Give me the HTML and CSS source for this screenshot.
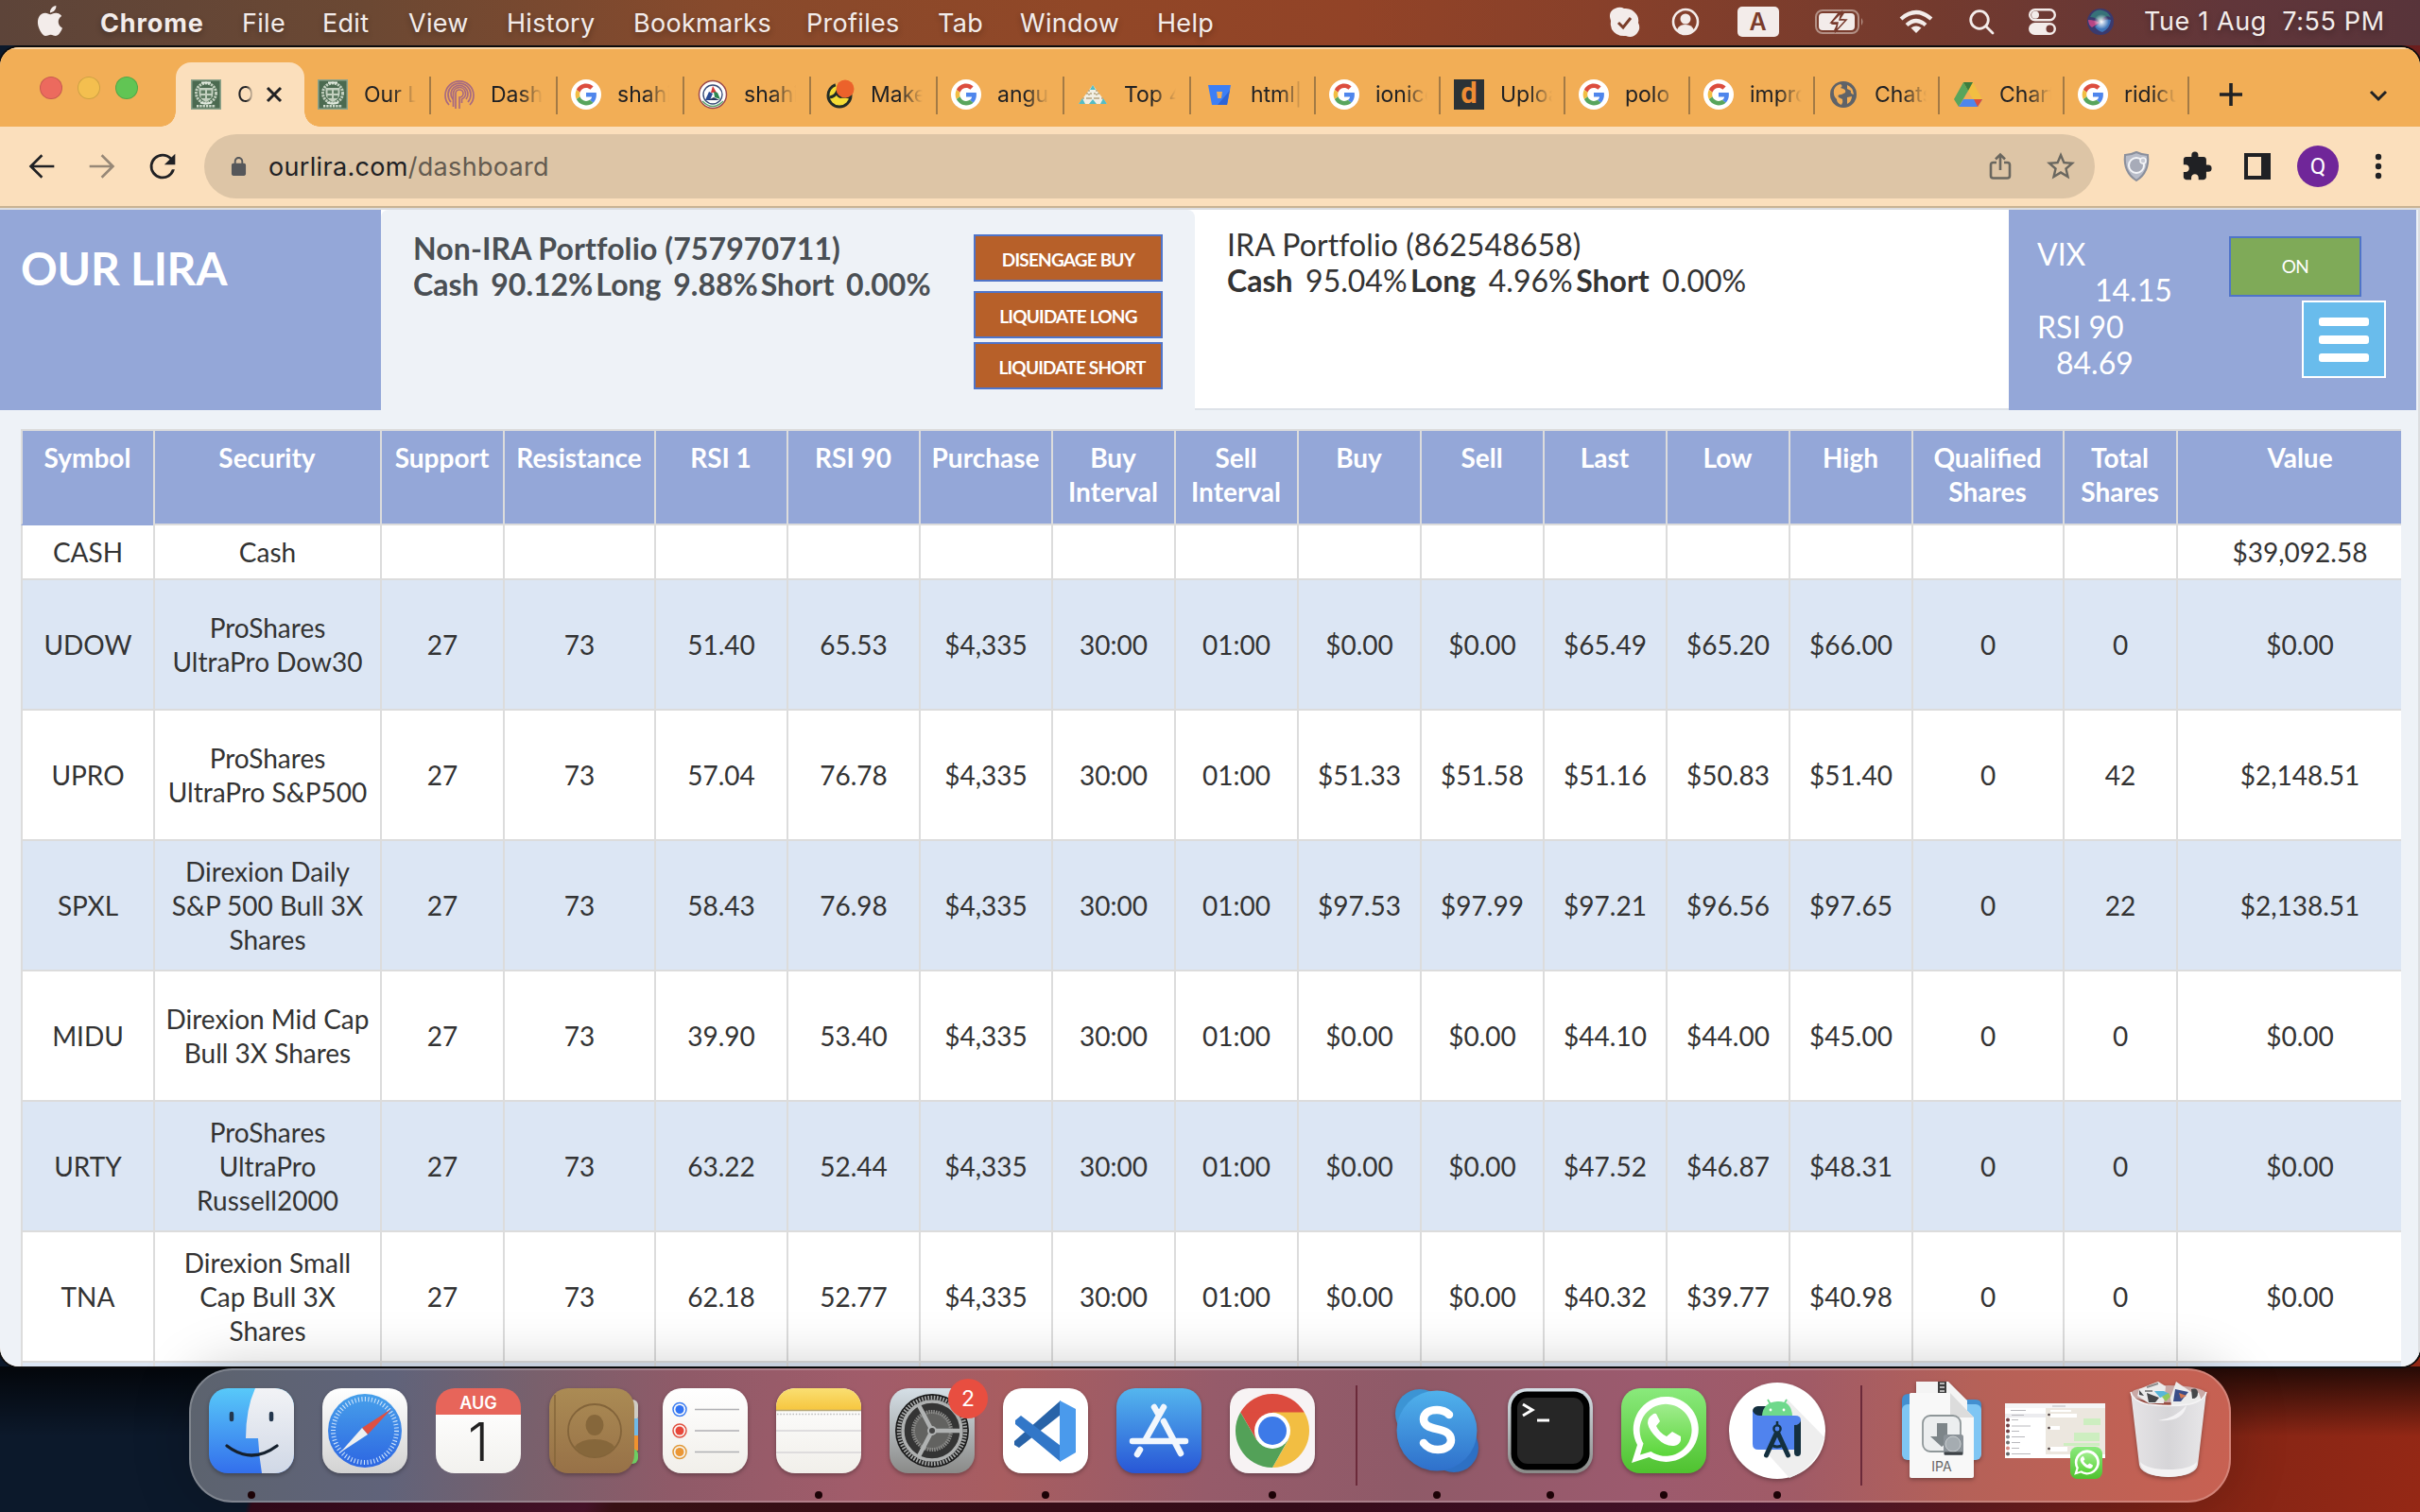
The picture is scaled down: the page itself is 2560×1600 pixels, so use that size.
FILE: index.html
```html
<!DOCTYPE html>
<html lang="en">
<head>
<meta charset="utf-8">
<title>Our Lira</title>
<link rel="stylesheet" href="styles.css">
</head>
<body>
<svg class="defs" width="0" height="0">
  <defs>
    <symbol id="google" viewBox="0 0 32 32">
      <circle cx="16" cy="16" r="16" fill="#fff"/>
      <g transform="translate(4.6 4.6) scale(.475)">
        <path fill="#dc4d3e" d="M24 9.5c3.54 0 6.71 1.22 9.21 3.6l6.85-6.85C35.9 2.38 30.47 0 24 0 14.62 0 6.51 5.38 2.56 13.22l7.98 6.19C12.43 13.72 17.74 9.5 24 9.5z"/>
        <path fill="#4f86ec" d="M46.98 24.55c0-1.57-.15-3.09-.38-4.55H24v9.02h12.94c-.58 2.96-2.26 5.48-4.78 7.18l7.73 6c4.51-4.18 7.09-10.36 7.09-17.65z"/>
        <path fill="#f2be42" d="M10.53 28.59c-.48-1.45-.76-2.99-.76-4.59s.27-3.14.76-4.59l-7.98-6.19C.92 16.46 0 20.12 0 24c0 3.88.92 7.54 2.56 10.78l7.97-6.19z"/>
        <path fill="#58a55c" d="M24 48c6.48 0 11.93-2.13 15.89-5.81l-7.73-6c-2.15 1.45-4.92 2.3-8.16 2.3-6.26 0-11.57-4.22-13.47-9.91l-7.98 6.19C6.51 42.62 14.62 48 24 48z"/>
      </g>
    </symbol>
    <symbol id="lira" viewBox="0 0 32 32">
      <rect width="32" height="32" fill="#8fa58c"/><rect x="1.500" y="1.500" width="29" height="29" fill="#4b6a50"/>
      <circle cx="16" cy="14.500" r="10.500" fill="none" stroke="#c3d0bf" stroke-width="3" stroke-dasharray="2.200 1"/>
      <path d="M8.500 9h15v6q0 6-7.500 9-7.500-3-7.500-9z" fill="#c3d0bf"/><path d="M10.500 11.500h4.500v3.500h-4.500zM17 11.500h4.500v3.500H17zM10.500 17h4.500v3h-4.500zM17 17h4.500v3H17z" fill="#5f7d63"/>
      <path d="M11 3.500h10M10 24.500q6 2 12 0" stroke="#e3ebe0" stroke-width="2" fill="none"/>
      <path d="M6 28.200h20" stroke="#d3ddcf" stroke-width="2.500" stroke-dasharray="2.300 1"/>
    </symbol>
    <symbol id="whatsapp" viewBox="0 0 90 90">
      <rect width="90" height="90" rx="20" fill="url(#waBg)"/>
      <path d="M11 79l6-19a34.500 34.500 0 1 1 12.500 13z" fill="#fff"/>
      <path d="M20 70.500l3.500-12a27.500 27.500 0 1 1 8 8.500z" fill="url(#waIn)"/>
      <path d="M33 28q-5 3-5 9 1 7 10 16t18 8q6-1 7-6v-4l-9-5-6 5q-8-4-11-11l4-5-4-8q-2-1-4 1z" fill="#fff"/>
    </symbol>
    <linearGradient id="waBg" x1="0" y1="0" x2="0" y2="1"><stop offset="0" stop-color="#8aea7c"/><stop offset="1" stop-color="#4fc22f"/></linearGradient>
    <linearGradient id="waIn" x1="0" y1="0" x2="0" y2="1"><stop offset="0" stop-color="#a0ec8e"/><stop offset="1" stop-color="#5bd63a"/></linearGradient>
    <linearGradient id="skyBlue" x1="0" y1="0" x2="0" y2="1"><stop offset="0" stop-color="#58c9f9"/><stop offset="1" stop-color="#336fec"/></linearGradient>
    <linearGradient id="silver" x1="0" y1="0" x2="0" y2="1"><stop offset="0" stop-color="#fff"/><stop offset="1" stop-color="#d2d2d2"/></linearGradient>
    <linearGradient id="face" x1="0" y1="0" x2="0" y2="1"><stop offset="0" stop-color="#f2f3f6"/><stop offset="1" stop-color="#d0d8e6"/></linearGradient>
    <linearGradient id="compass" x1="0" y1="0" x2="0" y2="1"><stop offset="0" stop-color="#47a0ea"/><stop offset="1" stop-color="#2d66e2"/></linearGradient>
    <linearGradient id="paper" x1="0" y1="0" x2="0" y2="1"><stop offset="0" stop-color="#fff"/><stop offset="1" stop-color="#f1efea"/></linearGradient>
    <linearGradient id="leather" x1="0" y1="0" x2="0" y2="1"><stop offset="0" stop-color="#ab8b54"/><stop offset="1" stop-color="#977147"/></linearGradient>
    <linearGradient id="steel" x1="0" y1="0" x2="0" y2="1"><stop offset="0" stop-color="#d5dfe6"/><stop offset="1" stop-color="#8a8a88"/></linearGradient>
    <linearGradient id="store" x1="0" y1="0" x2="0" y2="1"><stop offset="0" stop-color="#54b6ee"/><stop offset="1" stop-color="#2856d6"/></linearGradient>
    <linearGradient id="skype" x1="0" y1="0" x2="0" y2="1"><stop offset="0" stop-color="#50b2ec"/><stop offset="1" stop-color="#2f70cb"/></linearGradient>
    <linearGradient id="bin" x1="0" y1="0" x2="1" y2="0"><stop offset="0" stop-color="#e6e4e6"/><stop offset=".5" stop-color="#d6d5d8"/><stop offset="1" stop-color="#e8e7e9"/></linearGradient>
    <linearGradient id="noteTop" x1="0" y1="0" x2="0" y2="1"><stop offset="0" stop-color="#fadf72"/><stop offset="1" stop-color="#f6c63f"/></linearGradient>
    <radialGradient id="glow"><stop offset="0" stop-color="#fff"/><stop offset="1" stop-color="#fff" stop-opacity="0"/></radialGradient>
  </defs>
</svg>

<header class="menubar">
  <svg class="apple" viewBox="0 0 24 24"><path d="M12.152 6.896c-.948 0-2.415-1.078-3.96-1.04-2.04.027-3.91 1.183-4.961 3.014-2.117 3.675-.546 9.103 1.519 12.09 1.013 1.454 2.208 3.09 3.792 3.039 1.52-.065 2.09-.987 3.935-.987 1.831 0 2.35.987 3.96.948 1.637-.026 2.676-1.48 3.676-2.948 1.156-1.688 1.636-3.325 1.662-3.415-.039-.013-3.182-1.221-3.22-4.857-.026-3.04 2.48-4.494 2.597-4.559-1.429-2.09-3.623-2.324-4.39-2.376-2-.156-3.675 1.09-4.61 1.09zM15.53 3.83c.843-1.012 1.4-2.427 1.245-3.83-1.207.052-2.662.805-3.532 1.818-.78.896-1.454 2.338-1.273 3.714 1.338.104 2.715-.688 3.559-1.701"/></svg>
  <nav class="menus"><b>Chrome</b><span>File</span><span>Edit</span><span>View</span><span>History</span><span>Bookmarks</span><span>Profiles</span><span>Tab</span><span>Window</span><span>Help</span></nav>
  <div class="status">
    <svg width="33" height="33" viewBox="0 0 33 33"><path d="M9 1q4-1 7 1 8-1 13 6 3 4 2 9 3 6-1 11-5 6-12 3Q8 32 3 24 1 19 2 15-2 4 9 1z" fill="#f3ecea"/><path d="M10 17l5 5 8-10" fill="none" stroke="#7a3d29" stroke-width="3"/></svg>
    <svg width="30" height="30" viewBox="0 0 30 30"><circle cx="15" cy="15" r="13" fill="none" stroke="#f3ecea" stroke-width="2.600"/><circle cx="15" cy="12" r="5.500" fill="#f3ecea"/><path d="M6 24q2-6 9-6t9 6q-4 4-9 4t-9-4z" fill="#f3ecea"/></svg>
    <span class="input-source">A</span>
    <svg width="52" height="26" viewBox="0 0 52 26"><rect x="1" y="1" width="45" height="24" rx="7" fill="none" stroke="#b39085" stroke-width="2"/><path d="M49 9q3 4 0 8z" fill="#b39085"/><path d="M8 4h16l-7 9q-1 3 2 3h4l-3 6H8q-4 0-4-4V8q0-4 4-4zM31 4h7q4 0 4 4v10q0 4-4 4H22l9-10q1-2-1-2h-3z" fill="#f3ecea"/><path d="M28 3L17 14h7l-2 9 11-12h-7z" fill="#f3ecea" stroke="#77392c" stroke-width="1.500"/></svg>
    <svg width="36" height="26" viewBox="0 0 36 26" fill="none" stroke="#f3ecea" stroke-width="4.200"><path d="M2 10q16-14 32 0M8 16.500q10-9 20 0"/><path d="M18 25l-5.500-5.500q5.500-4 11 0z" fill="#f3ecea" stroke="none"/></svg>
    <svg width="26" height="26" viewBox="0 0 26 26" fill="none" stroke="#f3ecea" stroke-width="2.800"><circle cx="11" cy="11" r="9.300"/><path d="M18 18l7 7" stroke-linecap="round"/></svg>
    <svg width="29" height="28" viewBox="0 0 29 28"><rect x="1.200" y="1.200" width="26.600" height="11" rx="5.500" fill="none" stroke="#f3ecea" stroke-width="2.400"/><circle cx="7" cy="6.700" r="4" fill="#f3ecea"/><rect y="15" width="29" height="13" rx="6.500" fill="#f3ecea"/><circle cx="22.500" cy="21.500" r="4" fill="#6f3833"/></svg>
    <svg width="28" height="28" viewBox="0 0 28 28"><circle cx="14" cy="14" r="14" fill="#3a3a6e"/><path d="M3 9Q7 1 14 1.500q8 1 11 8-7-4-11 5-3-5-11-5.500z" fill="#35a183" opacity=".55"/><path d="M1 12q7 0 12 3-5 3-8 5-4-3-4-8z" fill="#d84a8b" opacity=".8"/><path d="M14 15q6-5 11-3-1 9-9 13-6-2-8-6z" fill="#3f8fd8" opacity=".7"/><circle cx="15" cy="14" r="8" fill="url(#glow)"/></svg>
    <time>Tue 1 Aug&nbsp; 7:55 PM</time>
  </div>
</header>

<main class="window">
  <div class="tabstrip">
    <div class="lights"><i class="red"></i><i class="yellow"></i><i class="green"></i></div>
    <div class="tab active"><svg class="fav"><use href="#lira"/></svg><span>Our</span><svg class="close" viewBox="0 0 20 20"><path d="M3 3l14 14M17 3L3 17" stroke="#202124" stroke-width="3"/></svg></div>
    <div class="tab"><svg class="fav"><use href="#lira"/></svg><span>Our Lira</span></div>
    <div class="tab"><svg class="fav" viewBox="0 0 32 32" fill="none" stroke="#a86a80" stroke-width="1.700"><path d="M5 27A15 15 0 1 1 27 27M7 24A12 12 0 1 1 25 24M9 21A9 9 0 1 1 23 21M12 31V15a4 4 0 1 1 4 4v12M9.500 29V15a6.500 6.500 0 1 1 9 6v4"/></svg><span>Dashboard</span></div>
    <div class="tab"><svg class="fav"><use href="#google"/></svg><span>shahid</span></div>
    <div class="tab"><svg class="fav" viewBox="0 0 32 32"><circle cx="16" cy="16" r="14.500" fill="#fff" stroke="#9c4a4c" stroke-width="1.500"/><circle cx="16" cy="16" r="10" fill="#fff" stroke="#394c77" stroke-width="1.400"/><path d="M16 7l4 7h-6z" fill="#d33a3a"/><path d="M12 13l4 2-3 7H8z" fill="#284a93"/><path d="M17 13l4 1 3 7-6-2z" fill="#2d8750"/><path d="M11 22l6-3 6 3z" fill="#26365f"/><path d="M5 23q11 11 22 0" fill="none" stroke="#5da36b" stroke-width="1.500"/></svg><span>shahid</span></div>
    <div class="tab"><svg class="fav" viewBox="0 0 32 32"><circle cx="16" cy="17" r="12" fill="#f5dc35" stroke="#222c26" stroke-width="3" stroke-dasharray="52 12"/><path d="M6 19q5-1 7-5 3 6 6 4 4 0 8 1" fill="none" stroke="#222c26" stroke-width="3"/><circle cx="22" cy="10" r="9.500" fill="#ec622b"/></svg><span>Make a</span></div>
    <div class="tab"><svg class="fav"><use href="#google"/></svg><span>angular</span></div>
    <div class="tab"><svg class="fav" viewBox="0 0 32 32"><path d="M16 6l15 20H1z" fill="#f2efe4"/><path d="M16 6l3 5h-6zM1 26l4-6 3 6zM12 26l4-5 4 5zM24 26l3-6 4 6z" fill="#55bdc5"/><path d="M9 15h14M5 20h22M12 11v10M20 11v10" stroke="#b5a47f" stroke-width="1.500" stroke-dasharray="2 2"/></svg><span>Top 40</span></div>
    <div class="tab t132"><svg class="fav" viewBox="0 0 32 32"><path d="M4 6h24l-4 21H8z" fill="#3d7ff5"/><path d="M14 27l11-13 2-3-3 16z" fill="#2c65d8"/><path d="M13 13h6l-1 7h-4z" fill="#f1ae56"/></svg><span>html|css</span></div>
    <div class="tab t132"><svg class="fav"><use href="#google"/></svg><span>ionicon</span></div>
    <div class="tab t132"><b class="fav dfav">d</b><span>Upload</span></div>
    <div class="tab t132"><svg class="fav"><use href="#google"/></svg><span>polo</span></div>
    <div class="tab t132"><svg class="fav"><use href="#google"/></svg><span>improve</span></div>
    <div class="tab t132"><svg class="fav" viewBox="0 0 32 32"><circle cx="16" cy="16" r="14" fill="#5f6368"/><path d="M6 11q2-5 7-6 3 2 0 4l3 1q3 1 2 4l-4 2q-5 0-3 3l4 2q1 3-1 6-5-2-5-6-4-3-3-10zM20 6q6 2 7 10-4-1-3-4l-4-2zM20 19l5-1q0 5-5 8z" fill="#f2ae56"/></svg><span>Chats</span></div>
    <div class="tab t132"><svg class="fav" viewBox="0 0 32 32"><path d="M11 3h10l10 18H21z" fill="#f2be42"/><path d="M11 3l5 9L6 29 1 21z" fill="#58a55c"/><path d="M11 3h10l-5 9z" fill="#3b7d3e"/><path d="M6 29l5-8h20l-5 8z" fill="#4f86ec"/><path d="M31 21h-9l4 8z" fill="#dc4d3e"/></svg><span>Chart</span></div>
    <div class="tab t132"><svg class="fav"><use href="#google"/></svg><span>ridicul</span></div>
    <svg class="plus" width="26" height="28" viewBox="0 0 26 28"><path d="M13 2v24M1 14h24" stroke="#202124" stroke-width="3.600"/></svg>
    <svg class="chevron" width="20" height="14" viewBox="0 0 20 14"><path d="M2 3l8 8 8-8" fill="none" stroke="#202124" stroke-width="3"/></svg>
  </div>

  <div class="toolbar">
    <svg class="nav-icon" viewBox="0 0 24 24"><path d="M20 11.200H7.100l5.700-5.700L11.700 4.300 4 12l7.700 7.700 1.100-1.200-5.700-5.700H20z"/></svg>
    <svg class="nav-icon dim" viewBox="0 0 24 24"><path d="M4 11.200h12.900l-5.700-5.700 1.100-1.200L20 12l-7.700 7.700-1.100-1.200 5.700-5.700H4z"/></svg>
    <svg class="nav-icon" viewBox="0 0 24 24"><path d="M17.650 6.350A7.960 7.960 0 0 0 12 4a8 8 0 1 0 7.730 10h-1.800A6.300 6.300 0 1 1 12 5.700c1.700 0 3.300.7 4.500 1.900L13.100 11H20V4z"/></svg>
    <div class="omnibox">
      <svg class="lock" viewBox="3 0 18 23"><path d="M18 8h-1V6c0-2.760-2.240-5-5-5S7 3.240 7 6v2H6c-1.100 0-2 .9-2 2v10c0 1.100.9 2 2 2h12c1.100 0 2-.9 2-2V10c0-1.100-.9-2-2-2zM9 6c0-1.660 1.340-3 3-3s3 1.340 3 3v2H9z"/></svg>
      <p class="url">ourlira.com<span>/dashboard</span></p>
      <svg class="share" width="24" height="30" viewBox="0 0 24 30"><path d="M8 11H4.500Q2 11 2 13.500V25q0 2.500 2.500 2.500h15Q22 27.500 22 25V13.500Q22 11 19.500 11H16M12 19V3M7 7.500l5-5 5 5"/></svg>
      <svg class="star" width="36" height="36" viewBox="0 0 24 24"><path d="M22 9.240l-7.190-.62L12 2 9.190 8.630 2 9.240l5.460 4.730L5.820 21 12 17.270 18.180 21l-1.630-7.030L22 9.240zM12 15.400l-3.760 2.270 1-4.280-3.320-2.880 4.380-.38L12 6.100l1.710 4.040 4.380.38-3.320 2.880 1 4.280L12 15.400z"/></svg>
    </div>
    <div class="extensions">
      <svg width="28" height="32" viewBox="0 0 28 32"><path d="M14 1q6 3 12 3 2 18-12 27Q0 22 2 4q6 0 12-3z" fill="#b9bdc9" stroke="#8a8f9c" stroke-width="2"/><circle cx="14" cy="15" r="8" fill="#a7abb8" stroke="#f4f5f8" stroke-width="2"/><circle cx="21" cy="10" r="3" fill="#c5c8d2" stroke="#f4f5f8" stroke-width="1.500"/></svg>
      <svg width="34" height="34" viewBox="0 0 24 24"><path d="M20.500 11H19V7c0-1.100-.9-2-2-2h-4V3.500a2.500 2.500 0 0 0-5 0V5H4c-1.100 0-1.990.9-1.990 2v3.800H3.500c1.490 0 2.700 1.210 2.700 2.700s-1.210 2.700-2.700 2.700H2V20c0 1.100.9 2 2 2h3.800v-1.500c0-1.490 1.210-2.700 2.700-2.700s2.700 1.210 2.700 2.700V22H17c1.100 0 2-.9 2-2v-4h1.500a2.500 2.500 0 0 0 0-5z" fill="#202124"/></svg>
      <svg width="28" height="28" viewBox="0 0 28 28"><path d="M0 0h28v28H0zM4 4v20h14V4z" fill="#202124" fill-rule="evenodd"/></svg>
      <span class="avatar">Q</span>
      <svg width="8" height="28" viewBox="0 0 8 28" fill="#202124"><circle cx="4" cy="4" r="3.200"/><circle cx="4" cy="14" r="3.200"/><circle cx="4" cy="24" r="3.200"/></svg>
    </div>
  </div>

  <section class="page">
    <div class="summary">
      <div class="brand">OUR LIRA</div>
      <div class="card-wrap"><div class="card non-ira">
        <div class="info"><div class="title">Non-IRA Portfolio (757970711)</div><div class="split">Cash&nbsp; 90.12%<i> </i>Long&nbsp; 9.88%<i> </i>Short&nbsp; 0.00%</div></div>
        <div class="actions"><button>DISENGAGE BUY</button><button>LIQUIDATE LONG</button><button>LIQUIDATE SHORT</button></div>
      </div></div>
      <div class="card ira"><div class="title">IRA Portfolio (862548658)</div><div class="split"><b>Cash</b>&nbsp; 95.04%<i> </i><b>Long</b>&nbsp; 4.96%<i> </i><b>Short</b>&nbsp; 0.00%</div></div>
      <div class="market">
        <div class="readings"><div>VIX</div><div class="vix">14.15</div><div>RSI 90</div><div class="rsi">84.69</div></div>
        <div class="controls"><button class="on">ON</button><button class="burger"><i></i><i></i><i></i></button></div>
      </div>
    </div>
    <table class="holdings">
      <colgroup><col class="w140"><col class="w240"><col class="w130"><col class="w160"><col class="w140"><col class="w140"><col class="w140"><col class="w130"><col class="w130"><col class="w130"><col class="w130"><col class="w130"><col class="w130"><col class="w130"><col class="w160"><col class="w120"><col></colgroup>
      <thead><tr><th>Symbol<th>Security<th>Support<th>Resistance<th>RSI 1<th>RSI 90<th>Purchase<th>Buy Interval<th>Sell Interval<th>Buy<th>Sell<th>Last<th>Low<th>High<th>Qualified Shares<th>Total Shares<th>Value</tr></thead>
      <tbody>
      <tr class="cash"><td>CASH<td>Cash<td><td><td><td><td><td><td><td><td><td><td><td><td><td><td>$39,092.58</tr>
      <tr><td>UDOW<td>ProShares UltraPro Dow30<td>27<td>73<td>51.40<td>65.53<td>$4,335<td>30:00<td>01:00<td>$0.00<td>$0.00<td>$65.49<td>$65.20<td>$66.00<td>0<td>0<td>$0.00</tr>
      <tr><td>UPRO<td>ProShares UltraPro S&amp;P500<td>27<td>73<td>57.04<td>76.78<td>$4,335<td>30:00<td>01:00<td>$51.33<td>$51.58<td>$51.16<td>$50.83<td>$51.40<td>0<td>42<td>$2,148.51</tr>
      <tr><td>SPXL<td>Direxion Daily S&amp;P 500 Bull 3X Shares<td>27<td>73<td>58.43<td>76.98<td>$4,335<td>30:00<td>01:00<td>$97.53<td>$97.99<td>$97.21<td>$96.56<td>$97.65<td>0<td>22<td>$2,138.51</tr>
      <tr><td>MIDU<td>Direxion Mid Cap Bull 3X Shares<td>27<td>73<td>39.90<td>53.40<td>$4,335<td>30:00<td>01:00<td>$0.00<td>$0.00<td>$44.10<td>$44.00<td>$45.00<td>0<td>0<td>$0.00</tr>
      <tr><td>URTY<td>ProShares UltraPro Russell2000<td>27<td>73<td>63.22<td>52.44<td>$4,335<td>30:00<td>01:00<td>$0.00<td>$0.00<td>$47.52<td>$46.87<td>$48.31<td>0<td>0<td>$0.00</tr>
      <tr><td>TNA<td>Direxion Small Cap Bull 3X Shares<td>27<td>73<td>62.18<td>52.77<td>$4,335<td>30:00<td>01:00<td>$0.00<td>$0.00<td>$40.32<td>$39.77<td>$40.98<td>0<td>0<td>$0.00</tr>
      <tr><td><td><td><td><td><td><td><td><td><td><td><td><td><td><td><td><td></tr>
      </tbody>
    </table>
  </section>
</main>

<footer class="dock">
  <div class="app running"><svg viewBox="0 0 90 90"><clipPath id="r"><rect width="90" height="90" rx="20"/></clipPath><g clip-path="url(#r)"><rect width="90" height="90" fill="url(#skyBlue)"/><path d="M49 0h41v90H56q-3-18-4-37H39Q39 22 49 0z" fill="url(#face)"/></g><path d="M24 27v6M66 27v6" stroke="#23364d" stroke-width="4.500" stroke-linecap="round"/><path d="M19 61q26 20 53 0" fill="none" stroke="#15202d" stroke-width="3.200" stroke-linecap="round"/></svg></div>
  <div class="app"><svg viewBox="0 0 90 90"><rect width="90" height="90" rx="20" fill="url(#silver)"/><circle cx="45" cy="45" r="39" fill="url(#compass)"/><circle cx="45" cy="45" r="33.500" fill="none" stroke="#cfe4fb" stroke-width="5" stroke-dasharray="1.100 2.400"/><path d="M73 22L48 49l-6-7z" fill="#dd5043"/><path d="M19 68l23-26 6 7z" fill="#eef0f2"/></svg></div>
  <div class="app calendar"><span>AUG</span><b>1</b></div>
  <div class="app"><svg viewBox="0 0 90 90"><rect x="60" y="12" width="34" height="24" rx="6" fill="#cfccc4"/><rect x="60" y="32" width="34" height="18" fill="#6fb9e8"/><rect x="60" y="50" width="34" height="16" fill="#f0922f"/><rect x="60" y="64" width="34" height="16" rx="6" fill="#6dcd62"/><rect width="90" height="90" rx="20" fill="url(#leather)"/><path d="M6 7v76" stroke="#85663a" stroke-width="1.500"/><circle cx="48" cy="45" r="28" fill="none" stroke="#83643a" stroke-width="1.800"/><ellipse cx="48" cy="39" rx="9.500" ry="11" fill="#86673b"/><path d="M27 62q6-8 21-8t21 8q-8 11-21 11t-21-11z" fill="#86673b"/></svg></div>
  <div class="app"><svg viewBox="0 0 90 90"><rect width="90" height="90" rx="20" fill="url(#paper)"/><g stroke="#b0b0b4" stroke-width="1.600"><path d="M34 22.500h47M34 45h47M34 67.500h47"/></g><g fill="none" stroke-width="1.500"><circle cx="18" cy="22.500" r="7" stroke="#3b7cf0"/><circle cx="18" cy="45" r="7" stroke="#e1503f"/><circle cx="18" cy="67.500" r="7" stroke="#e19a3a"/></g><circle cx="18" cy="22.500" r="4.500" fill="#3173f3"/><circle cx="18" cy="45" r="4.500" fill="#e8473a"/><circle cx="18" cy="67.500" r="4.500" fill="#eb9735"/></svg></div>
  <div class="app running"><svg viewBox="0 0 90 90"><g clip-path="url(#r)"><rect width="90" height="90" fill="url(#paper)"/><rect width="90" height="23" fill="url(#noteTop)"/><path d="M0 23.500h90" stroke="#b7a876" stroke-width="1.500"/><path d="M1 27.500h90" stroke="#bbb" stroke-width="1.500" stroke-dasharray="1.500 1.800"/><path d="M0 45h90M0 68h90" stroke="#d6d5d8" stroke-width="1.500"/></g></svg></div>
  <div class="app"><svg viewBox="0 0 90 90"><rect width="90" height="90" rx="20" fill="url(#steel)"/><circle cx="45" cy="45" r="39" fill="#1b1b1b"/><circle cx="45" cy="45" r="35" fill="none" stroke="#a6a8a8" stroke-width="4.500" stroke-dasharray="1.700 1.500"/><circle cx="45" cy="45" r="31" fill="#343434" stroke="#aeb0b0" stroke-width="3.500"/><circle cx="45" cy="45" r="20" fill="#626260" stroke="#8c8c8a" stroke-width="4" stroke-dasharray="1.500 1"/><path d="M45 45h30M45 45L31 18M45 45L31 72" stroke="#b0b2b2" stroke-width="4.500"/><circle cx="45" cy="45" r="4" fill="#444" stroke="#b0b2b2" stroke-width="2"/></svg><span class="count">2</span></div>
  <div class="app running"><svg viewBox="0 0 90 90"><rect width="90" height="90" rx="20" fill="#fff"/><path d="M61 13L12 56v4l5 3 44-35z" fill="#2863a8"/><path d="M13 34l6-5 42 32v17L13 38z" fill="#3277c8"/><path d="M60 13l17 9v46l-17 10z" fill="#4a9aec"/></svg></div>
  <div class="app"><svg viewBox="0 0 90 90"><rect width="90" height="90" rx="20" fill="url(#store)"/><g stroke="#f2f7fd" stroke-width="6.500" stroke-linecap="round"><path d="M17 56h56M50 20L31 54M40 20l4 7M50 35l18 34M25 65l-3 5"/></g></svg></div>
  <div class="app running"><svg viewBox="0 0 90 90"><rect width="90" height="90" rx="20" fill="#f7f3f4"/><path d="M45 45L11.200 25.500A39 39 0 0 1 78.800 25.500z" fill="#dc4b3e"/><path d="M45 25.500h33.800A39 39 0 0 1 45 84l17-29.500z" fill="#f2be42"/><path d="M11.200 25.500L28 54.500 45 45V25.500z" fill="#dc4b3e"/><path d="M11.200 25.500L28 54.500 45 64l17-10-17 30A39 39 0 0 1 11.200 25.500z" fill="#53a158"/><circle cx="45" cy="45" r="19" fill="#fff"/><circle cx="45" cy="45" r="15" fill="#3d7ae8"/></svg></div>
  <i class="divider"></i>
  <div class="app running"><svg viewBox="0 0 90 90"><circle cx="27" cy="27" r="26" fill="#3c94d4"/><circle cx="63" cy="63" r="26" fill="#2d70c4"/><circle cx="45" cy="45" r="42.500" fill="url(#skype)"/><path d="M58 28Q53 23 45 23c-9 0-14 4-14 10 0 14 29 6 29 22 0 6-6 10-14 10-7 0-12-3-15-7" fill="none" stroke="#fff" stroke-width="8.500" stroke-linecap="round"/></svg></div>
  <div class="app running"><svg viewBox="0 0 90 90"><rect width="90" height="90" rx="20" fill="url(#steel)"/><rect x="3.500" y="3.500" width="83" height="83" rx="17" fill="#000"/><rect x="10" y="10" width="70" height="70" rx="11" fill="#262626"/><path d="M16 17l10 6-10 6M31 34h13" fill="none" stroke="#fff" stroke-width="3"/></svg></div>
  <div class="app running"><svg viewBox="0 0 90 90"><use href="#whatsapp"/></svg></div>
  <div class="app running"><svg viewBox="0 0 90 90"><circle cx="45" cy="45" r="51" fill="#fff"/><path d="M55 11l40 41q-8 31-37 43L32 66z" fill="#eeeeee"/><rect x="19" y="19" width="22" height="11" rx="5.500" fill="#14303f"/><path d="M29 29q1-14 16-15t16 15z" fill="#6fd98c"/><path d="M35 12l4 7M55 12l-4 7" stroke="#6fd98c" stroke-width="1.800"/><circle cx="38" cy="23" r="1.400" fill="#fff"/><circle cx="52" cy="23" r="1.400" fill="#fff"/><path d="M19 24q2 5 8 5h37q6 0 6 5t-6 5v26H25q-6 0-6-6z" fill="#5083ee"/><path d="M63 39q6 0 7-5v34q0 4-3.500 4T63 68z" fill="#14303f"/><path d="M45 35v4" stroke="#14303f" stroke-width="2.500"/><path d="M44 48L33.500 71M46 48l10.500 23" stroke="#14303f" stroke-width="5" stroke-linecap="round"/><path d="M39 60q6 4 12 0" fill="none" stroke="#14303f" stroke-width="3"/><circle cx="45" cy="43" r="3.600" fill="#5083ee" stroke="#14303f" stroke-width="2.400"/></svg></div>
  <i class="divider"></i>
  <div class="app ipa"><svg viewBox="0 0 90 90"><path d="M3 13q0-7 7-7h26l6 6h39q6 0 6 6v20H3z" fill="#438fd0"/><rect x="3" y="17" width="84" height="59" rx="6" fill="#7fc6f4"/><path d="M18-7h34l20 20v60H18z" fill="#f4f4f4"/><path d="M41-7h9V5h-9z" fill="#3d3d3d"/><path d="M43-5h5M43-1h5M43 3h5" stroke="#ddd" stroke-width="1.500"/><path d="M12 5h42l25 26v62q0 2-2 2H13q-2 0-2-2V6z" fill="#f8f8f8"/><path d="M54 5l25 26H56q-2 0-2-2z" fill="#dcdcdc"/><rect x="25" y="29" width="40" height="38" rx="8" fill="#eceeef" stroke="#8f9799" stroke-width="1.800"/><path d="M40 37h11v14h7L45 62 33 51h7z" fill="#7d8589"/><rect x="47" y="49" width="21" height="22" rx="2.500" fill="#8b9298"/><circle cx="57" cy="59" r="8" fill="#a5acb1" stroke="#c9ced1"/><path d="M48 69h19" stroke="#3d4246" stroke-width="3"/></svg><span>IPA</span></div>
  <div class="thumb">
    <svg viewBox="0 0 106 58"><rect width="106" height="58" fill="#fff"/><rect x="43" y="5" width="63" height="49" fill="#ece7df"/><rect y="0" width="106" height="5" fill="#f5f5f6"/><path d="M0 11h43v4H0z" fill="#ececef"/><g stroke="#b9b9bd" stroke-width="1.200"><path d="M6 7.500h16M7 12.500h13M7 17.500h7M7 24h20M7 29.500h8M7 35.500h14M7 41.500h9M7 47.500h8M7 53.500h20M50 3h14"/></g><g fill="#704247"><circle cx="3" cy="17.500" r="2"/><circle cx="3" cy="23.500" r="2"/><circle cx="3" cy="29.500" r="2"/><circle cx="3" cy="35.500" r="2" fill="#858c91"/><circle cx="3" cy="41.500" r="2" fill="#707070"/><circle cx="3" cy="47.500" r="2" fill="#d48982"/><circle cx="3" cy="53.500" r="2" fill="#626568"/></g><path d="M48 7h22v2H48zM48 11h28v4H48zM48 24h10v4H48zM48 46h18v5H48z" fill="#fff"/><path d="M83 16h18v7H83zM73 31h27v9H73zM62 42h38v3H62z" fill="#cdeec0"/><g fill="#4c4040"><circle cx="46.500" cy="12" r="1.300"/><circle cx="46.500" cy="26" r="1.300"/><circle cx="46.500" cy="48" r="1.300"/></g></svg>
    <svg class="mini" viewBox="0 0 90 90"><use href="#whatsapp"/></svg>
  </div>
  <div class="app trash"><svg viewBox="0 0 90 90"><ellipse cx="45" cy="6" rx="40" ry="9" fill="#c9a9a6"/><path d="M14 1l12-5 8-3 8 5-2 18H24L12 8z" fill="#ececec"/><path d="M47 10l6-17 16 11 8 1 3 8-12 6H48z" fill="#ececec"/><path d="M22-1l12-4M20 3l8 0" stroke="#8c8c8c" stroke-width="2"/><path d="M22 5l13 5-4 5h-7zM69 1q7-2 7 4t-6 6zM14 2l5 6-5-1z" fill="#46484a"/><path d="M30 3h10l6 3-10 4z" fill="#58b7d9"/><path d="M45 5l2 4-5 5-4-5z" fill="#92c95c"/><path d="M52 1l14 3-8 10h-8z" fill="#3a4d88"/><path d="M56 5l8 3-6 3z" fill="#d47750"/><path d="M5 4q2 9 18 13 22 3 44 0 16-4 18-13l-9 77q-2 12-31 13-29-1-31-13z" fill="url(#bin)"/><path d="M5 4q2 9 18 13 22 3 44 0 16-4 18-13" fill="none" stroke="#f5f4f5" stroke-width="1.500"/><path d="M34 34q18-2 30-16-3 18-30 16z" fill="#f3f2f4"/><path d="M15 78q8 8 30 8t30-8q-1 15-30 16-29-1-30-16z" fill="#f3f2f3"/></svg></div>
</footer>
</body>
</html>
```
FILE: styles.css
```css
* { box-sizing: border-box; }
body {
  margin: 0; width: 2560px; height: 1600px; overflow: hidden;
  display: flex; flex-direction: column; gap: 2px;
  font-family: Inter, "Liberation Sans", sans-serif; color: #333;
  background:
    linear-gradient(to bottom, transparent 1446px, rgba(0,0,0,.75) 1446px, transparent 1520px),
    linear-gradient(105deg, #0c192b 0 23%, #350a1b 23.200%, #4b142c 35%, #3d1216 36%, #3a0d1c 60%, #4d1530 77%, #5f1a22 83%, #842515 92%, #952815 100%);
}
.defs { position: absolute; }
button { font: inherit; color: #fff; }
svg { display: block; flex: none; overflow: visible; }

.menubar {
  height: 48px; flex: none; display: flex; align-items: flex-start;
  color: #f3ecea; font-size: 27px; line-height: 49px; letter-spacing: .3px;
  background: linear-gradient(90deg, #5d4439 0, #6b4833 15%, #884a2c 30%, #914727 45%, #924327 56%, #88402a 66%, #733a2e 80%, #61363a 92%, #58343a 100%);
  text-shadow: 0 3px 6px rgba(0,0,0,.3);
}
.apple { width: 32px; height: 32px; margin: 6px 0 0 37px; fill: #f3ecea; }
.menus { display: grid; grid-template-columns: 150px 85px 91px 104px 134px 183px 139px 87px 145px 70px; margin-left: 37px; white-space: nowrap; }
.menus b { font-weight: 700; letter-spacing: .9px; }
.status {
  margin-left: auto; padding-right: 38px; height: 46px; display: grid; align-items: center; line-height: 44px; letter-spacing: .6px;
  grid-template-columns: 66px 70px 82px 89px 74px 63px 62px 60px 254px; white-space: nowrap;
}
.input-source { width: 44px; height: 32px; border-radius: 5px; background: #f3ecea; color: #7b3c2b; font-size: 25px; font-weight: 600; line-height: 32px; text-align: center; text-shadow: none; }

.window { height: 1396px; flex: none; display: flex; flex-direction: column; border-radius: 20px; overflow: hidden; background: #fbdfbc; box-shadow: 0 0 0 2px #0b0b0d; }
.tabstrip { height: 84px; flex: none; display: flex; background: #f2ae56; border-top: 2px solid #f9d6a8; }
.lights { width: 186px; padding: 29px 0 0 42px; display: flex; gap: 16px; flex: none; }
.lights i { width: 24px; height: 24px; border-radius: 50%; border: 1px solid rgba(0,0,0,.15); }
.red { background: #ec6a5e; } .yellow { background: #f4bf4f; } .green { background: #61c554; }
.tab { width: 134px; height: 66px; margin-top: 14px; padding: 18px 0 0 14px; display: flex; flex: none; position: relative; font-size: 23px; line-height: 32px; color: #202124; white-space: nowrap; }
.t132 { width: 132px; }
.tab:not(.active)::after { content: ""; position: absolute; right: 0; top: 15px; width: 2px; height: 40px; background: #a37a45; }
.tab span { width: 55px; margin-left: 17px; overflow: hidden; mask-image: linear-gradient(90deg, #000 55%, transparent 100%); }
.fav { width: 32px; height: 32px; flex: none; }
.dfav { background: #2b3236; color: #ee8c34; font: 700 31px/30px Roboto, sans-serif; text-align: center; }
.active { width: 136px; height: 68px; padding-left: 16px; background: #fbdfbc; border-radius: 16px 16px 0 0; }
.active::before, .active::after { content: ""; position: absolute; bottom: 0; width: 16px; height: 16px; }
.active::before { left: -16px; background: radial-gradient(circle at 0 0, transparent 15.500px, #fbdfbc 16px); }
.active::after { right: -16px; background: radial-gradient(circle at 100% 0, transparent 15.500px, #fbdfbc 16px); }
.active span { width: 17px; }
.close { width: 20px; height: 20px; margin: 6px 0 0 12px; }
.plus { margin: 34px 0 0 31px; }
.chevron { margin: 42px 0 0 133px; }

.toolbar { height: 86px; flex: none; padding: 8px 12px 0 24px; display: flex; align-items: flex-start; border-bottom: 2px solid #c9b394; }
.nav-icon { width: 40px; height: 40px; margin: 14px 24px 0 0; fill: #202124; }
.dim { opacity: .45; }
.omnibox { width: 2000px; height: 68px; padding: 0 18px 0 28px; border-radius: 34px; background: #ddc5a6; display: flex; align-items: center; color: #202124; font-size: 27px; letter-spacing: .32px; }
.lock { width: 17px; height: 22px; fill: #55575a; }
.url { margin: 0 auto 0 23px; }
.url span { color: #645b50; }
.share { fill: none; stroke: #6a675f; stroke-width: 2.600; margin-right: 34px; }
.star { fill: #6a675f; }
.extensions { margin-left: 12px; height: 68px; display: grid; grid-template-columns: repeat(5, 64px); place-items: center; }
.avatar { width: 44px; height: 44px; border-radius: 50%; background: #702699; color: #fff; font: 24px/44px Roboto, sans-serif; text-align: center; }

.page { flex: 1; min-height: 0; overflow: hidden; background: #eef2f7; border: solid #dcdde0; border-width: 2px 2px 0 0; font-family: Lato, sans-serif; }
.summary { display: flex; height: 212px; font-size: 32px; line-height: 38.400px; width: 2556px; }
.brand { width: 403px; padding: 33px 0 0 22px; background: #94a7d8; color: #fff; font-size: 48px; line-height: 58px; font-weight: 700; letter-spacing: -.25px; }
.card-wrap { width: 861px; background: #fff; display: flex; }
.card { width: 861px; flex: none; display: flex; }
.non-ira { background: #eef2f7; border-radius: 8px 8px 0 0; padding: 22px 34px 0; color: #4a4f54; font-weight: 700; justify-content: space-between; }
.info, .ira { white-space: nowrap; }
.title { letter-spacing: .1px; }
.split { word-spacing: -1.400px; }
.split i { word-spacing: -4px; }
.actions { margin-top: 4px; width: 200px; font-size: 19px; letter-spacing: -.8px; }
.actions button { display: block; width: 200px; height: 50px; margin: 0 0 10px; padding: 4px 0 0; border: 2px solid #4f74c9; background: #b76029; letter-spacing: inherit; }
.actions button:nth-child(2) { margin-bottom: 4px; }
.actions button:nth-child(3) { padding-left: 8px; }
.ira { display: block; background: #fff; border-bottom: 2px solid #dde2e8; padding: 18px 34px; }
.market { width: 431px; padding: 28px 32px 0 30px; background: #94a7d8; color: #fff; display: flex; justify-content: space-between; }
.vix { padding-left: 61px; } .rsi { padding-left: 20px; }
.controls { width: 166px; }
.on { display: block; width: 140px; height: 64px; border: 2px solid #4f74c9; background: #7faa58; font-size: 19px; letter-spacing: -.5px; padding: 0; }
.burger { display: flex; flex-direction: column; gap: 10px; width: 89px; height: 82px; margin: 4px 0 0 77px; padding: 16px; border: 2px solid #fff; background: #69bcec; }
.burger i { width: 53px; height: 9px; border-radius: 3px; background: #fff; flex: none; }

.holdings { width: 2518px; margin: 20px 0 0 22px; table-layout: fixed; border-spacing: 0; font-size: 28px; line-height: 36px; text-align: center; }
.w140 { width: 140px; } .w240 { width: 240px; } .w130 { width: 130px; } .w160 { width: 160px; } .w120 { width: 120px; }
th { height: 102px; padding: 10px 5px 0 4px; vertical-align: top; background: #94a7d8; color: #fff; border: solid #dcdcdc; border-width: 2px 0 2px 2px; }
th:first-child { border-bottom-color: #94a7d8; }
td { height: 138px; padding: 0 9px; background: #fff; border: solid #dcdcdc; border-width: 0 0 2px 2px; }
.cash td { height: 58px; }
tr:nth-child(even) td { background: #dce6f4; }
th:last-child, td:last-child { padding-left: 26px; padding-right: 4px; }

.dock {
  width: 2160px; height: 142px; flex: none; align-self: center; position: relative; display: flex; align-items: flex-start; gap: 30px;
  padding: 19px 19px 0; border: 2px solid rgba(255,255,255,.22); border-radius: 46px;
  background: linear-gradient(95deg, #5c636e 0, #60637a 10%, #79606c 17%, #8f5a68 24%, #a15c6a 33%, #a85d60 40%, #965b6a 50%, #8f5a68 60%, #9c5a6e 71%, #a15b66 79%, #b56158 87%, #c86152 100%) border-box;
  box-shadow: 0 0 60px rgba(0,0,0,.22);
}
.app { width: 90px; height: 90px; flex: none; position: relative; }
.app svg { width: 90px; height: 90px; filter: drop-shadow(0 2px 2px rgba(0,0,0,.3)); }
.running::after { content: ""; position: absolute; left: 41px; top: 109px; width: 8px; height: 8px; border-radius: 50%; background: #1c0206; }
.calendar { border-radius: 20px; overflow: hidden; background: linear-gradient(#e7655a 28px, #fdfdfc 28px, #f2f1ee); text-align: center; color: #222; }
.calendar span { display: block; height: 28px; color: #fff; font-size: 18px; line-height: 31px; font-weight: 600; }
.calendar b { display: block; font-size: 56px; line-height: 58px; font-weight: 300; }
.count { position: absolute; left: 62px; top: -10px; width: 42px; height: 42px; border-radius: 50%; background: #e84e40; color: #fff; font-size: 23px; line-height: 42px; text-align: center; }
.divider { width: 2px; height: 106px; flex: none; margin: -3px 9px 0 13px; background: #6b2a3a; }
.ipa span { position: absolute; left: 0; top: 75px; width: 90px; text-align: center; font-size: 14px; line-height: 16px; color: #666; }
.thumb { width: 106px; margin: 16px -8px 0; position: relative; flex: none; }
.mini { position: absolute; left: 69px; top: 46px; width: 34px; height: 34px; }
```
